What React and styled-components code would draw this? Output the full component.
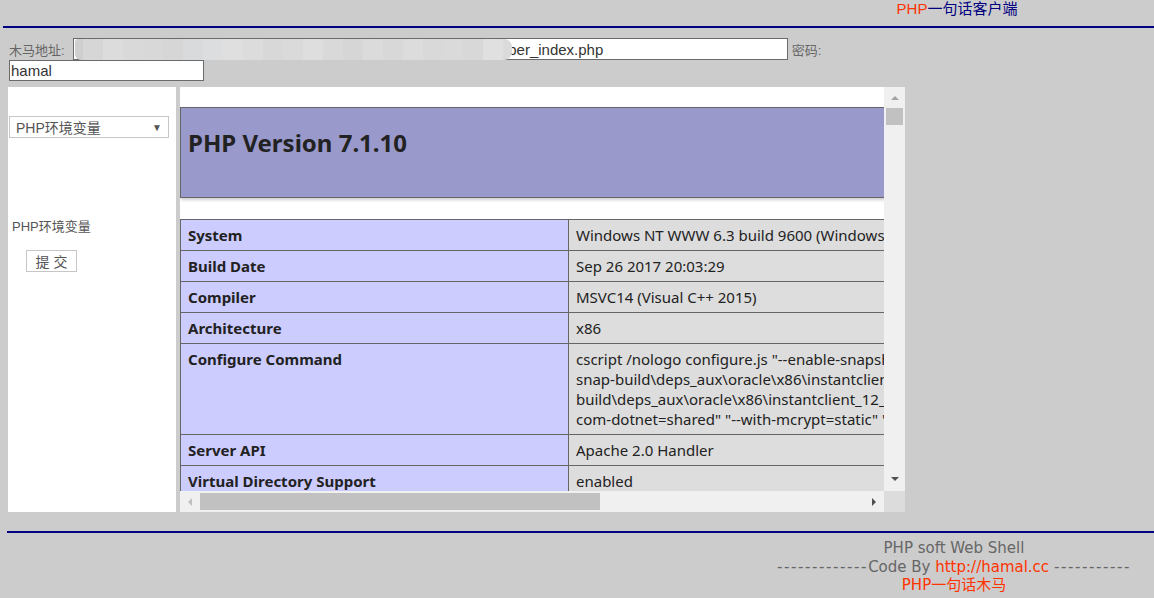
import React from 'react';
import styled, { createGlobalStyle } from 'styled-components';

const Global = createGlobalStyle`
  html, body { margin: 0; padding: 0; background: #cccccc; }
  body {
    width: 1154px; height: 598px; overflow: hidden;
    font-family: "Liberation Sans", "Noto Sans CJK SC", sans-serif;
  }
`;

const TitleBar = styled.div`
  display: flex;
  justify-content: flex-end;
`;
const Title = styled.div`
  width: 394px;
  text-align: center;
  font-size: 15px;
  line-height: 18px;
  color: #000080;
`;
const Red = styled.span`
  color: #ff3300;
`;
const Rule = styled.div`
  height: 2px;
  background: #000080;
  margin: ${p => p.$m};
`;

const Form = styled.div`
  padding: 10px 0 0 9px;
`;
const Row = styled.div`
  display: flex;
  align-items: center;
`;
const Label = styled.span`
  font-size: 13px;
  color: #666;
  margin-right: ${p => p.$mr || 0}px;
  margin-left: ${p => p.$ml || 0}px;
`;
const InputWrap = styled.div`
  position: relative;
`;
const TextInput = styled.input`
  box-sizing: border-box;
  width: ${p => p.$w}px;
  height: ${p => p.$h}px;
  border: 1px solid #6b6b6b;
  background: #fff;
  padding: 0 1px;
  margin: 0;
  font-family: "Liberation Sans", sans-serif;
  font-size: 15px;
  color: #333;
  outline: none;
`;
const Blur = styled.div`
  position: absolute;
  left: 2px;
  top: 1px;
  width: 437px;
  height: 21px;
  border-radius: 3px 8px 8px 6px;
  background: linear-gradient(90deg,
    #cfcfcf 0 8px, #d6d6d6 8px 28px, #dcdcdc 28px 48px, #d9d9d9 48px 68px,
    #d8d8d8 68px 88px, #d6d6d6 88px 108px, #d9dadc 108px 128px, #dcdddf 128px 148px,
    #dfdfe0 148px 168px, #dcdcdc 168px 188px, #d8d8d8 188px 208px, #dadada 208px 228px,
    #dedede 228px 248px, #d9d9d9 248px 268px, #d6d6d6 268px 288px, #dbdbdb 288px 308px,
    #d8d8d8 308px 328px, #dcdcdc 328px 348px, #d9d9d9 348px 368px, #dadada 368px 388px,
    #d8d8d8 388px 408px, #e0e0e0 408px 428px, #dbdbdb 428px 437px);
`;

const Main = styled.div`
  display: flex;
  gap: 4px;
  margin: 6px 0 0 8px;
  height: 425px;
`;
const Side = styled.div`
  width: 168px;
  background: #fff;
  padding-top: 29px;
  box-sizing: border-box;
`;
const FakeSelect = styled.div`
  box-sizing: border-box;
  width: 160px;
  height: 22px;
  margin-left: 1px;
  border: 1px solid #c6c6c6;
  display: flex;
  align-items: center;
  justify-content: space-between;
  padding: 0 6px 0 6px;
  font-size: 14px;
  color: #555;
`;
const Caret = styled.span`
  font-size: 10px;
  color: #555;
`;
const SideLabel = styled.div`
  margin: 81px 0 0 4px;
  font-size: 13px;
  line-height: 16px;
  color: #555;
`;
const Submit = styled.button`
  box-sizing: border-box;
  margin: 15px 0 0 18px;
  width: 51px;
  height: 22px;
  border: 1px solid #c6c6c6;
  background: #fff;
  font-family: "Liberation Sans", "Noto Sans CJK SC", sans-serif;
  font-size: 14px;
  color: #555;
  padding: 0;
`;

const Frame = styled.div`
  width: 725px;
  display: grid;
  grid-template-columns: 1fr 21px;
  grid-template-rows: 1fr 21px;
  background: #fff;
`;
const View = styled.div`
  overflow: hidden;
  padding-top: 20px;
  font-family: "Noto Sans", "Noto Sans CJK SC", sans-serif;
  color: #222;
`;
const Head = styled.div`
  box-sizing: border-box;
  width: 934px;
  height: 91px;
  border: 1px solid #666;
  background: #9999cc;
  box-shadow: 1px 2px 3px #ccc;
  padding: 21px 0 0 7px;
`;
const H1 = styled.h1`
  margin: 0;
  font-size: 24px;
  line-height: 28px;
  font-weight: 700;
`;
const Table = styled.table`
  margin-top: 21px;
  width: 934px;
  border-collapse: collapse;
  table-layout: fixed;
`;
const Cell = styled.td`
  border: 1px solid #666;
  padding: 5px 7px;
  font-size: 15px;
  line-height: 20px;
  vertical-align: top;
  white-space: nowrap;
  overflow: hidden;
  background: ${p => (p.$e ? '#ccccff' : '#dddddd')};
  font-weight: ${p => (p.$e ? 700 : 400)};
`;

const VBar = styled.div`
  background: #f0f0f0;
  display: flex;
  flex-direction: column;
  align-items: center;
`;
const HBar = styled.div`
  background: #f0f0f0;
  display: flex;
  align-items: center;
`;
const Corner = styled.div`
  background: #dcdcdc;
`;
const ArrowBox = styled.div`
  width: ${p => p.$w}px;
  height: ${p => p.$h}px;
  display: flex;
  align-items: center;
  justify-content: center;
  flex: none;
`;
const VThumb = styled.div`
  width: 17px;
  height: 17px;
  background: #c1c1c1;
  flex: none;
`;
const HThumb = styled.div`
  width: 400px;
  height: 17px;
  background: #c1c1c1;
  flex: none;
`;
const Spacer = styled.div`
  flex: 1;
`;

const Tri = ({ dir, color }) => {
  const pts = {
    up: '0,6 4,2 8,6',
    down: '0,2 8,2 4,6',
    left: '6,0 6,8 2,4',
    right: '2,0 2,8 6,4',
  }[dir];
  return (
    <svg width="8" height="8" viewBox="0 0 8 8">
      <polygon points={pts} fill={color} />
    </svg>
  );
};

const FooterText = styled.div`
  width: 400px;
  margin: 6px 0 0 auto;
  text-align: center;
  font-family: "DejaVu Sans", "Noto Sans CJK SC", sans-serif;
  font-size: 15px;
  line-height: 18.5px;
  color: #666;
`;
const Dash = styled.span`
  letter-spacing: 1.6px;
`;

const rows = [
  ['System', ['Windows NT WWW 6.3 build 9600 (Windows Server 2012 R2 Standard Edition) i586']],
  ['Build Date', ['Sep 26 2017 20:03:29']],
  ['Compiler', ['MSVC14 (Visual C++ 2015)']],
  ['Architecture', ['x86']],
  [
    'Configure Command',
    [
      'cscript /nologo configure.js "--enable-snapshot-build" "--enable-debug-pack" "--with-pdo-oci=c:\\php-',
      'snap-build\\deps_aux\\oracle\\x86\\instantclient_12_1\\sdk,shared" "--with-oci8-12c=c:\\php-snap-',
      'build\\deps_aux\\oracle\\x86\\instantclient_12_1\\sdk,shared" "--enable-object-out-dir=../obj/" "--enable-',
      'com-dotnet=shared" "--with-mcrypt=static" "--without-analyzer" "--with-pgo"',
    ],
  ],
  ['Server API', ['Apache 2.0 Handler']],
  ['Virtual Directory Support', ['enabled']],
  ['Configuration File (php.ini) Path', ['C:\\Windows']],
];

export default function App() {
  return (
    <>
      <Global />
      <TitleBar>
        <Title>
          <Red>PHP</Red>一句话客户端
        </Title>
      </TitleBar>
      <Rule $m="8px 0 0 3px" />
      <Form>
        <Row>
          <Label $mr={8}>木马地址:</Label>
          <InputWrap>
            <TextInput
              $w={715}
              $h={22}
              readOnly
              defaultValue="http://192.168.1.101/wordpress/wp-content/plugins/hm/shell/member_index.php"
            />
            <Blur />
          </InputWrap>
          <Label $ml={4}>密码:</Label>
        </Row>
        <Row>
          <TextInput $w={195} $h={21} readOnly defaultValue="hamal" />
        </Row>
      </Form>
      <Main>
        <Side>
          <FakeSelect>
            <span>PHP环境变量</span>
            <Caret>▼</Caret>
          </FakeSelect>
          <SideLabel>PHP环境变量</SideLabel>
          <Submit>提 交</Submit>
        </Side>
        <Frame>
          <View>
            <Head>
              <H1>PHP Version 7.1.10</H1>
            </Head>
            <Table>
              <colgroup>
                <col style={{ width: 388 }} />
                <col />
              </colgroup>
              <tbody>
                {rows.map(([k, v]) => (
                  <tr key={k}>
                    <Cell $e>{k}</Cell>
                    <Cell>
                      {v.map((line, i) => (
                        <div key={i}>{line}</div>
                      ))}
                    </Cell>
                  </tr>
                ))}
              </tbody>
            </Table>
          </View>
          <VBar>
            <ArrowBox $w={21} $h={21}>
              <Tri dir="up" color="#a3a3a3" />
            </ArrowBox>
            <VThumb />
            <Spacer />
            <ArrowBox $w={21} $h={25}>
              <Tri dir="down" color="#505050" />
            </ArrowBox>
          </VBar>
          <HBar>
            <ArrowBox $w={20} $h={21}>
              <Tri dir="left" color="#bfbfbf" />
            </ArrowBox>
            <HThumb />
            <Spacer />
            <ArrowBox $w={20} $h={21}>
              <Tri dir="right" color="#505050" />
            </ArrowBox>
          </HBar>
          <Corner />
        </Frame>
      </Main>
      <Rule $m="19px 0 0 7px" />
      <FooterText>
        <div>PHP soft Web Shell</div>
        <div>
          <Dash>-------------</Dash>Code By <Red>http://hamal.cc</Red> <Dash>-----------</Dash>
        </div>
        <div>
          <Red>PHP一句话木马</Red>
        </div>
      </FooterText>
    </>
  );
}
